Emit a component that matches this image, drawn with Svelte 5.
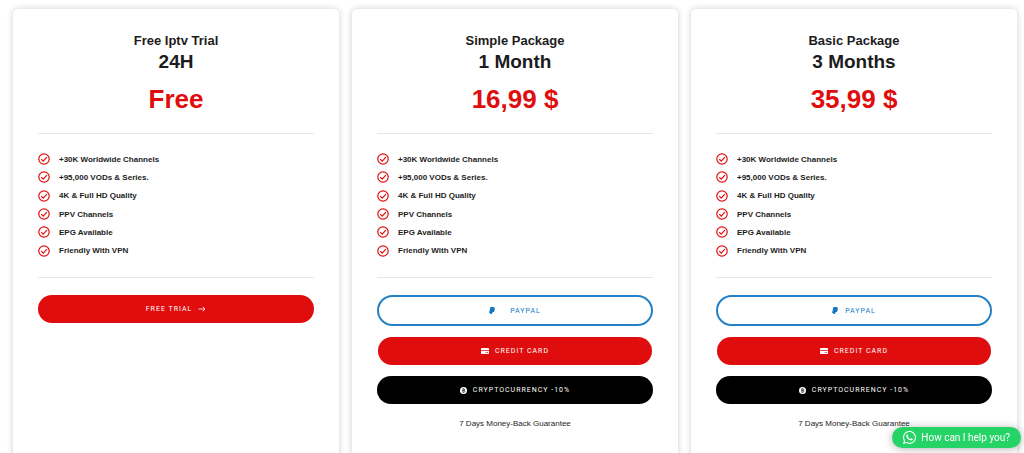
<script lang="ts">
  type Method = "trial" | "paypal" | "card" | "crypto";

  type Plan = {
    name: string;
    duration: string;
    price: string;
    methods: Method[];
    wideIcon?: boolean;
  };

  const features = [
    "+30K Worldwide Channels",
    "+95,000 VODs & Series.",
    "4K & Full HD Quality",
    "PPV Channels",
    "EPG Available",
    "Friendly With VPN",
  ];

  const plans: Plan[] = [
    { name: "Free Iptv Trial", duration: "24H", price: "Free", methods: ["trial"] },
    {
      name: "Simple Package",
      duration: "1 Month",
      price: "16,99 $",
      methods: ["paypal", "card", "crypto"],
      wideIcon: true,
    },
    {
      name: "Basic Package",
      duration: "3 Months",
      price: "35,99 $",
      methods: ["paypal", "card", "crypto"],
    },
  ];
</script>

<main class="plans">
  {#each plans as plan}
    <section class="plan">
      <header>
        <h2>{plan.name}</h2>
        <p class="duration">{plan.duration}</p>
        <p class="price">{plan.price}</p>
      </header>

      <ul class="features">
        {#each features as feature}
          <li>
            <svg class="check" viewBox="0 0 24 24" aria-hidden="true">
              <circle cx="12" cy="12" r="10.4" />
              <path d="M6.500 12.200l3.900 4 7.400-7.800" />
            </svg>
            {feature}
          </li>
        {/each}
      </ul>

      <div class="actions">
        {#each plan.methods as method}
          {#if method === "trial"}
            <button class="btn red">
              FREE TRIAL
              <svg class="arrow" viewBox="0 0 16 12" aria-hidden="true">
                <path d="M1 6h13M9.500 1.500L14 6l-4.500 4.500" />
              </svg>
            </button>
          {:else if method === "paypal"}
            <button class="btn paypal" class:wide={plan.wideIcon}>
              <svg class="pp" viewBox="0 0 12 14" aria-hidden="true">
                <path
                  d="M3 0h5.200c2.400 0 3.800 1.400 3.500 3.800-.1.800-.3 1.400-.6 2 .2 3-1.500 4.600-4.300 4.700L6 14H2.300l.2-1.800H0z"
                />
              </svg>
              PAYPAL
            </button>
          {:else if method === "card"}
            <button class="btn red inset">
              <svg class="cc" viewBox="0 0 16 12" aria-hidden="true">
                <path
                  fill-rule="evenodd"
                  d="M1.500 0h13A1.500 1.500 0 0 1 16 1.500V4H0V1.500A1.500 1.500 0 0 1 1.500 0zM0 5.500h16v5a1.500 1.500 0 0 1-1.500 1.500h-13A1.500 1.500 0 0 1 0 10.500zM9 8v1.500h2V8zm3 0v1.500h2V8z"
                />
              </svg>
              CREDIT CARD
            </button>
          {:else}
            <button class="btn black">
              <svg class="coin" viewBox="0 0 14 14" aria-hidden="true">
                <circle cx="7" cy="7" r="7" />
                <path
                  d="M5.500 3.500h2.200a1.600 1.600 0 0 1 0 3.300H5.500zm0 3.300H8a1.800 1.800 0 0 1 0 3.600H5.500zM6.500 2.300v1.200M6.500 10.400v1.300"
                />
              </svg>
              CRYPTOCURRENCY -10%
            </button>
          {/if}
        {/each}
      </div>

      {#if plan.methods.length > 1}
        <p class="note">7 Days Money-Back Guarantee</p>
      {/if}
    </section>
  {/each}
</main>

<button class="chat">
  <svg class="whatsapp" viewBox="0 0 448 512" aria-hidden="true">
    <path
      d="M380.900 97.100C339 55.100 283.200 32 223.900 32c-122.400 0-222 99.600-222 222 0 39.100 10.200 77.300 29.600 111L0 480l117.700-30.900c32.400 17.700 68.900 27 106.100 27h.1c122.300 0 224.100-99.600 224.100-222 0-59.300-25.200-115-67.100-157zm-157 341.600c-33.200 0-65.700-8.900-94-25.700l-6.700-4-69.800 18.300L72 359.200l-4.400-7c-18.500-29.400-28.200-63.300-28.200-98.200 0-101.700 82.800-184.500 184.600-184.500 49.300 0 95.600 19.200 130.400 54.100 34.800 34.900 56.200 81.200 56.100 130.500 0 101.800-84.900 184.600-186.600 184.600zm101.200-138.200c-5.500-2.800-32.800-16.200-37.900-18-5.100-1.900-8.800-2.800-12.500 2.800-3.700 5.600-14.300 18-17.600 21.800-3.200 3.700-6.500 4.200-12 1.400-32.600-16.300-54-29.100-75.500-66-5.700-9.800 5.700-9.100 16.300-30.300 1.800-3.700.9-6.900-.5-9.700-1.400-2.800-12.500-30.100-17.100-41.200-4.500-10.800-9.100-9.300-12.500-9.500-3.200-.2-6.900-.2-10.600-.2-3.700 0-9.700 1.400-14.800 6.900-5.100 5.600-19.400 19-19.400 46.300 0 27.300 19.900 53.700 22.600 57.400 2.800 3.700 39.100 59.700 94.800 83.800 35.200 15.200 49 16.500 66.600 13.900 10.700-1.600 32.800-13.400 37.400-26.400 4.600-13 4.600-24.100 3.200-26.400-1.300-2.500-5-3.900-10.500-6.600z"
    />
  </svg>
  How can I help you?
</button>

<style>
  :global(body) {
    background: #fff;
  }

  .plans {
    display: grid;
    grid-template-columns: repeat(3, 1fr);
    gap: 13px;
    padding: 9px 7px 0 13px;
    font-family: "Liberation Sans", Arial, sans-serif;
    color: #1c1c1c;
  }

  .plan {
    padding: 24px 25px 40px;
    border-radius: 5px;
    background: #fff;
    box-shadow: 0 0 6px rgba(0, 0, 0, 0.2);
  }

  header {
    padding-bottom: 18px;
    border-bottom: 1px solid #e6e6e6;
    text-align: center;
    font-weight: 700;
  }

  h2,
  p {
    margin: 0;
  }

  h2 {
    font-size: 13px;
    line-height: 16px;
  }

  .duration {
    font-size: 19px;
    line-height: 26px;
  }

  .price {
    padding-top: 8px;
    font-size: 26px;
    line-height: 32px;
    color: #df0d0d;
  }

  .features {
    display: grid;
    grid-auto-rows: 1fr;
    min-height: 110px;
    margin: 0;
    padding: 16px 0 17px;
    border-bottom: 1px solid #e6e6e6;
    list-style: none;
    font-size: 8px;
    font-weight: 700;
  }

  li {
    display: flex;
    align-items: center;
    gap: 9px;
  }

  .check {
    width: 12px;
    height: 12px;
    fill: none;
    stroke: #df0d0d;
    stroke-width: 2.4;
  }

  .actions {
    display: grid;
    gap: 11px;
    padding-top: 17px;
  }

  .btn {
    display: flex;
    align-items: center;
    justify-content: center;
    gap: 6px;
    height: 28px;
    padding: 0;
    border: 0;
    border-radius: 16px;
    font-family: Roboto, sans-serif;
    font-size: 7px;
    font-weight: 400;
    letter-spacing: 1px;
    color: #fff;
    cursor: pointer;
  }

  .btn svg {
    fill: currentColor;
  }

  .red {
    background: #df0d0d;
  }

  .black {
    background: #000;
  }

  .inset {
    margin: 0 1px;
  }

  .paypal {
    height: 31px;
    border: 2px solid #2481c5;
    gap: 7px;
    background: #fff;
    color: #1477bf;
  }

  .paypal.wide {
    gap: 15px;
  }

  .btn .arrow {
    width: 8px;
    height: 6px;
    fill: none;
    stroke: currentColor;
    stroke-width: 1.6;
  }

  .pp {
    width: 6px;
    height: 7px;
  }

  .cc {
    width: 8px;
    height: 6px;
  }

  .coin {
    width: 7px;
    height: 7px;
  }

  .coin path {
    fill: none;
    stroke: #000;
    stroke-width: 1.2;
  }

  .note {
    padding-top: 13px;
    font-size: 8px;
    line-height: 14px;
    text-align: center;
  }

  .chat {
    position: fixed;
    right: 3px;
    bottom: 5px;
    display: flex;
    align-items: center;
    gap: 5px;
    height: 21px;
    padding: 0 11px;
    border: 0;
    border-radius: 11px;
    background: #25d366;
    box-shadow: 0 1px 8px rgba(0, 0, 0, 0.3);
    font-family: Roboto, sans-serif;
    font-size: 10px;
    color: #fff;
    cursor: pointer;
  }

  .whatsapp {
    width: 13px;
    height: 15px;
    fill: currentColor;
  }
</style>
